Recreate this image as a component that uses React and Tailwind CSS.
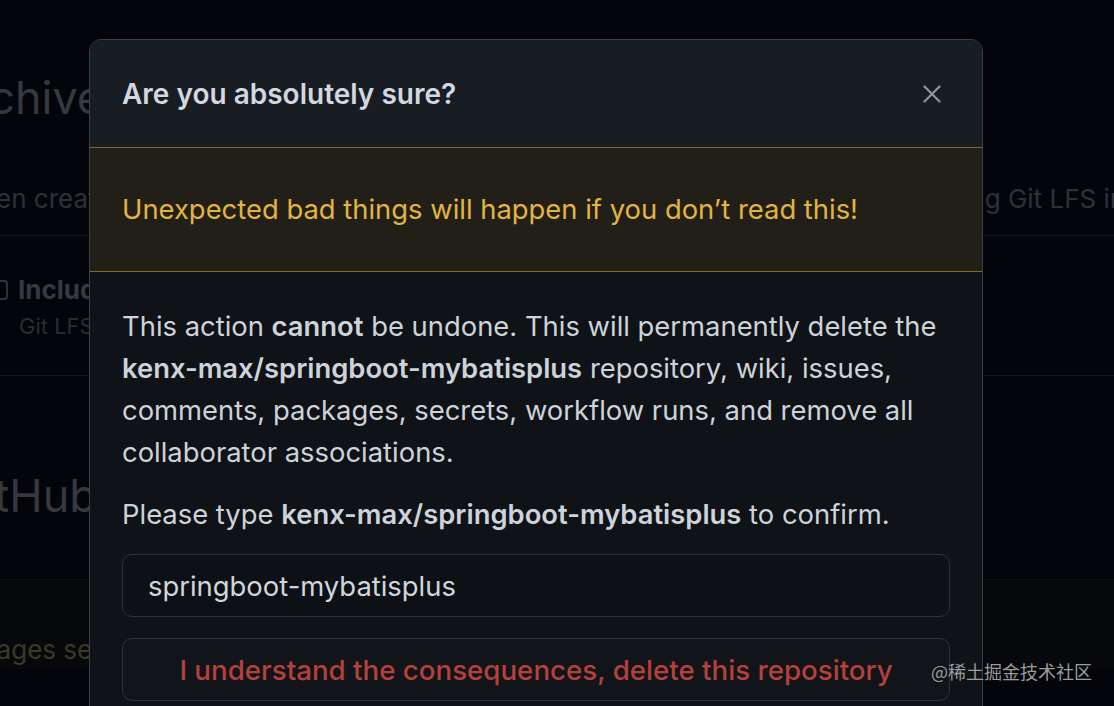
import React from 'react';
import { X } from 'lucide-react';

const font = { fontFamily: 'Inter, "Noto Sans", "Liberation Sans", sans-serif' };

const Backdrop = () => (
    <div className="flex flex-col text-[#35393f]">
        <div className="h-[48px]" />
        <div className="h-[100px] flex items-center">
            <span className="-ml-[58px] text-[45px] whitespace-nowrap">Archives</span>
        </div>
        <div className="h-[87px] grid grid-cols-[983px_1fr] items-center pt-[14px] text-[26px] text-[#2e3237]">
            <span className="-ml-[45px] whitespace-nowrap">When created, archives</span>
            <span className="-ml-[20px] whitespace-nowrap">ing Git LFS in archives</span>
        </div>
        <div className="h-px bg-[#13161b]" />
        <div className="h-[139px] flex flex-col pt-[34px]">
            <div className="flex items-center gap-[10px]">
                <span className="-ml-[12px] w-[20px] h-[20px] rounded-[4px] border-2 border-[#2f3338]" />
                <span className="font-bold text-[26px] text-[#36393e] whitespace-nowrap">Include Git LFS objects in archives</span>
            </div>
            <span className="ml-[19px] mt-[1px] text-[22px] text-[#2a2d32] whitespace-nowrap">Git LFS usage in archives is billed</span>
        </div>
        <div className="h-px bg-[#13161b]" />
        <div className="h-[203px] flex items-center pt-[36px]">
            <span className="-ml-[50px] text-[45px] whitespace-nowrap">GitHub Pages</span>
        </div>
        <div className="flex-1 border-t border-[#0e1014] bg-[#07080b] pt-[50px]">
            <span className="-ml-[20px] text-[26px] text-[#3b3a24] whitespace-nowrap">Pages settings</span>
        </div>
    </div>
);

const DeleteDialog = () => (
    <div className="absolute left-[89px] top-[39px] w-[894px] h-[700px] rounded-[12px] border border-[#3b4047] bg-[#0f1216] overflow-hidden">
        <div className="h-[107px] bg-[#181c23] flex items-center justify-between pl-[32px] pr-[35px]">
            <h2 className="text-[28px] font-semibold text-[#d2d8df]">Are you absolutely sure?</h2>
            <X size={30} strokeWidth={1.9} className="text-[#8b929b]" />
        </div>
        <div className="h-[125px] border-y border-[#8a6924] bg-[#221f18] flex items-center px-[32px]">
            <p className="text-[27.4px] text-[#e2b442]">Unexpected bad things will happen if you don’t read this!</p>
        </div>
        <div className="px-[32px] pt-[33px] text-[27.4px] leading-[42px] text-[#cdd3da]">
            <p className="mb-[20px]">
                This action <b className="font-semibold">cannot</b> be undone. This will permanently delete the{' '}
                <b className="font-semibold">kenx-max/springboot-mybatisplus</b> repository, wiki, issues, comments, packages, secrets, workflow runs, and remove all collaborator associations.
            </p>
            <p>
                Please type <b className="font-semibold">kenx-max/springboot-mybatisplus</b> to confirm.
            </p>
            <div className="mt-[19px] h-[63px] rounded-[10px] border border-[#2e333a] bg-[#0d1014] flex items-center px-[25px] text-[#d0d6dd]">
                springboot-mybatisplus
            </div>
            <button className="mt-[21px] w-full h-[63px] rounded-[10px] border border-[#2e333a] bg-[#111418] flex items-center justify-center text-[27.7px] text-[#b5403c] font-medium">
                I understand the consequences, delete this repository
            </button>
        </div>
    </div>
);

export default function App() {
    return (
        <div className="relative w-[1114px] h-[706px] overflow-hidden bg-[#03050b]" style={font}>
            <Backdrop />
            <DeleteDialog />
            <div className="absolute left-[931px] top-[658px] text-[18px] text-[#9c9c9c] whitespace-nowrap" style={{ fontFamily: '"Noto Sans CJK SC", "Noto Sans", sans-serif' }}>
                @稀土掘金技术社区
            </div>
        </div>
    );
}
